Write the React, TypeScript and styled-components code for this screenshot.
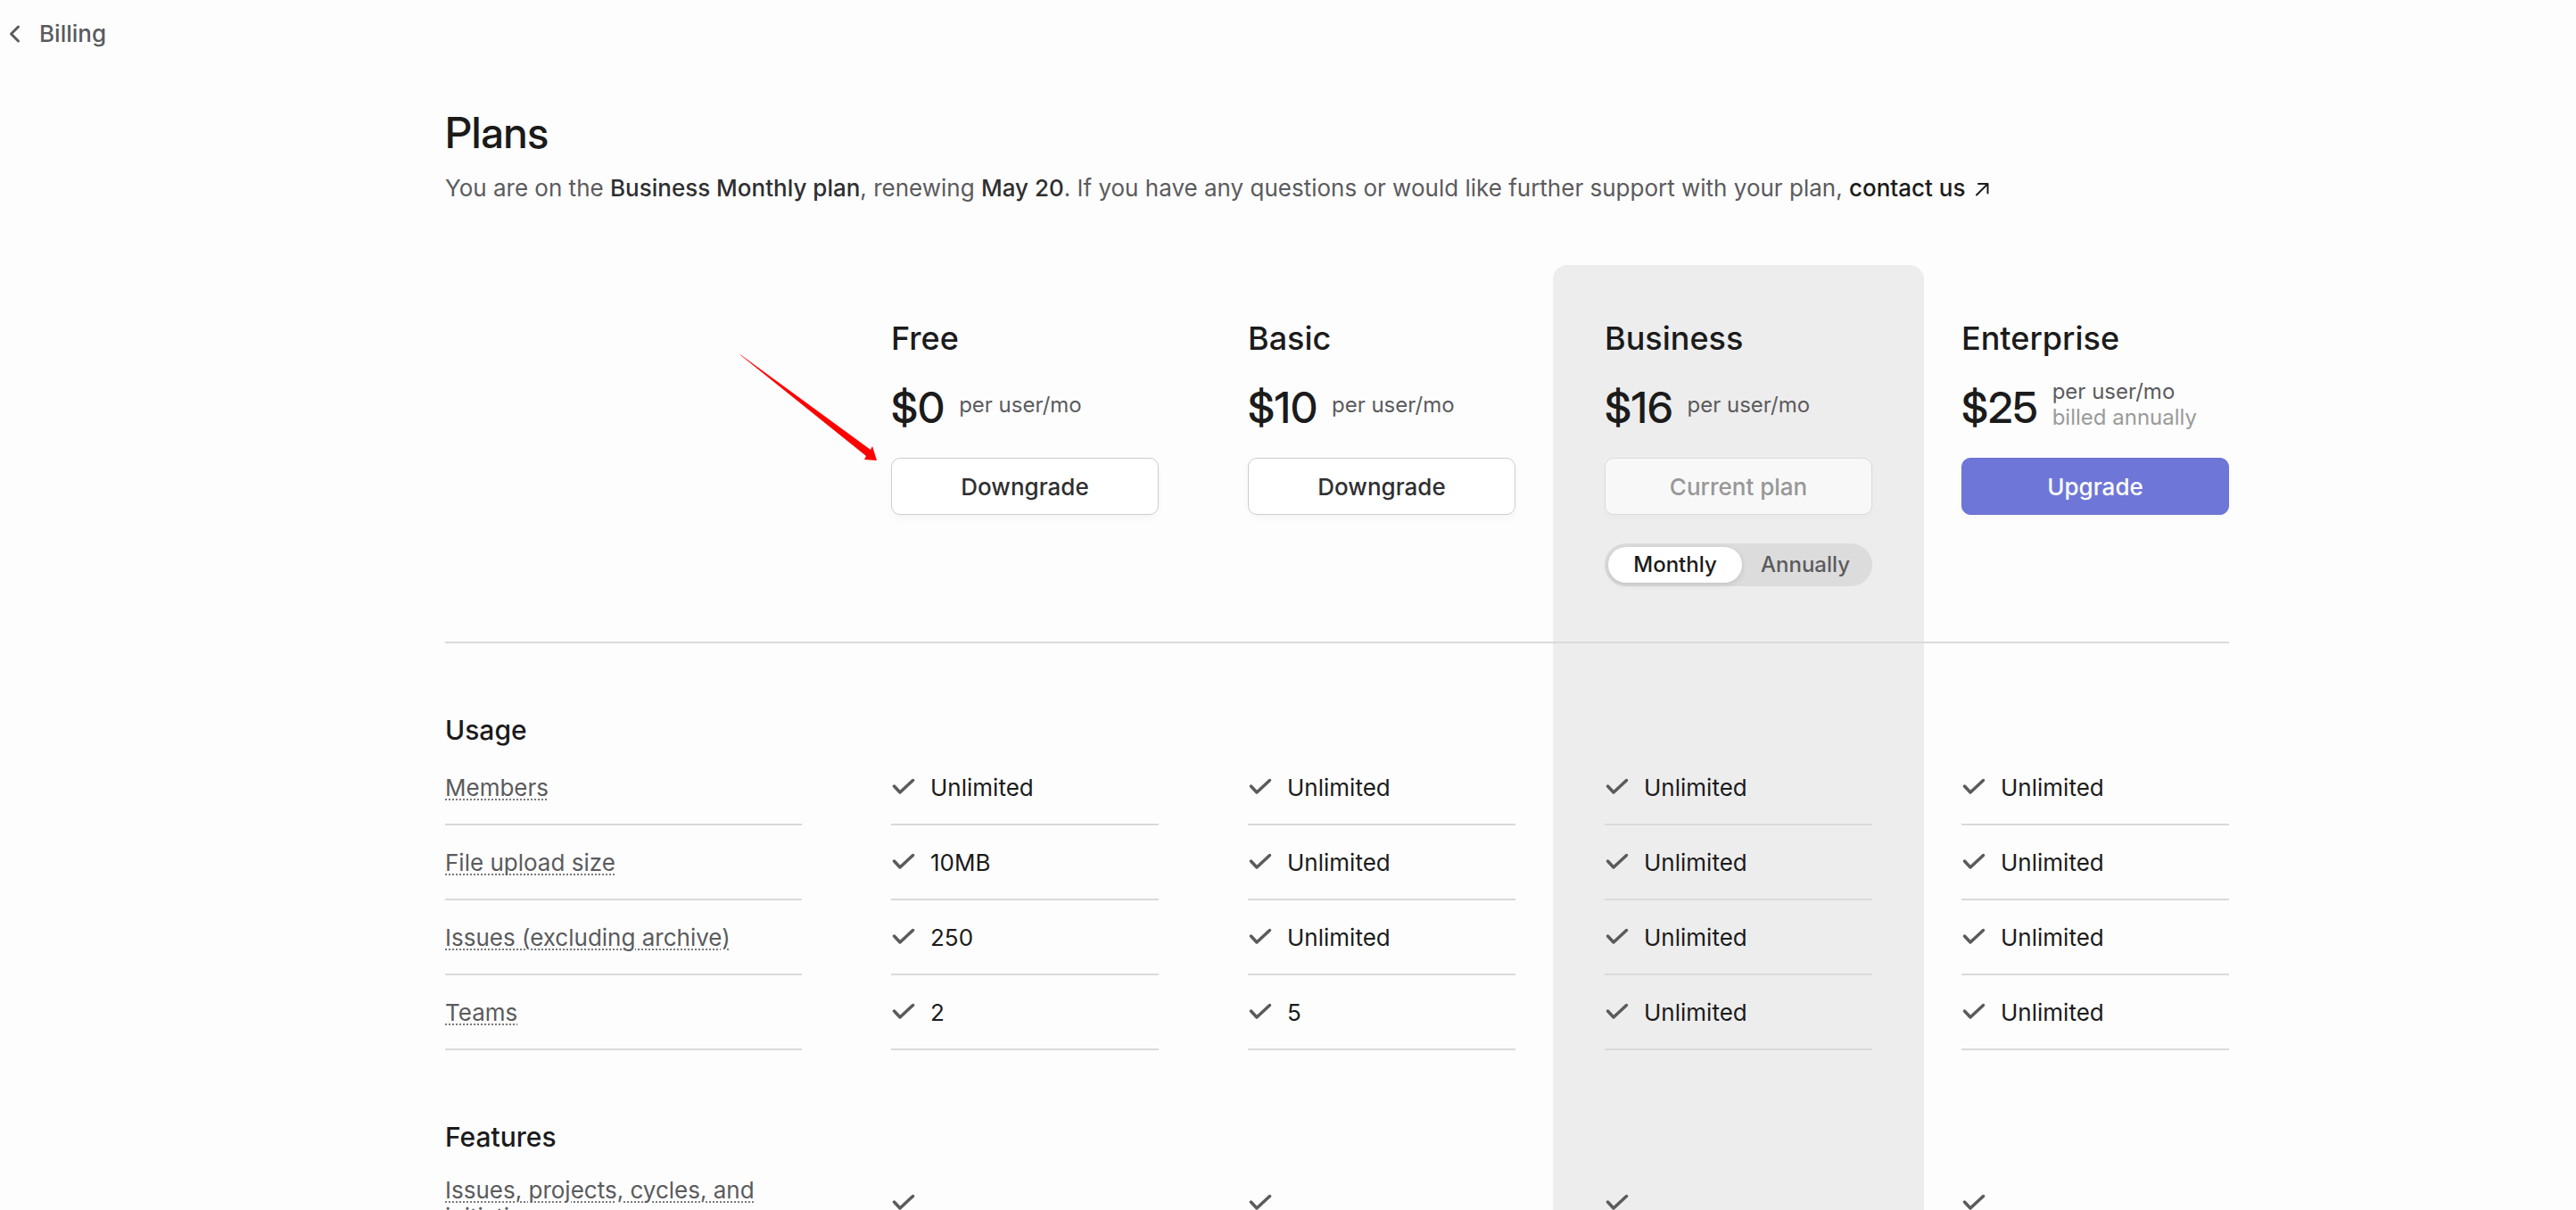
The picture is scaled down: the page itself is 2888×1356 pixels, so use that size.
import React, { useState } from "react";
import styled, { createGlobalStyle, css } from "styled-components";

const GlobalStyle = createGlobalStyle`
  *, *::before, *::after { box-sizing: border-box; }
  body {
    margin: 0;
    background: #fdfdfd;
    color: #1b1b1b;
    font-family: Inter, "Liberation Sans", sans-serif;
    font-size: 26px;
    font-weight: 400;
    line-height: 30px;
    -webkit-font-smoothing: antialiased;
  }
`;

const PLAN_COLUMNS = "4fr repeat(4, 3fr)";
const COLUMN_GAP = "100px";
const DISPLAY_FONT = '"Inter Display", Inter, "Liberation Sans", sans-serif';

const Page = styled.div`
  height: 100vh;
  overflow-y: auto;
  scrollbar-width: none;
`;

const TopBar = styled.header`
  display: flex;
  align-items: center;
  height: 76px;
  padding: 0 8px;
`;

const BackLink = styled.a`
  display: flex;
  align-items: center;
  gap: 20px;
  color: #5b5b5d;
  font-weight: 500;
  text-decoration: none;
`;

const Main = styled.main`
  padding-left: 110px;
`;

const Content = styled.div`
  max-width: 2000px;
  margin: 0 auto;
`;

const Title = styled.h1`
  margin: 0;
  padding-top: 44px;
  font-family: ${DISPLAY_FONT};
  font-size: 48px;
  font-weight: 500;
  line-height: 58px;
`;

const Intro = styled.p`
  margin: 0;
  padding: 11px 0 64px;
  line-height: 44px;
  color: #5b5b5d;
`;

const Strong = styled.strong`
  font-weight: 500;
  color: #2f2f31;
`;

const ContactLink = styled.a`
  color: #1b1b1b;
  font-weight: 500;
  text-decoration: none;
  white-space: nowrap;

  svg {
    margin-left: 10px;
  }
`;

const Comparison = styled.div`
  position: relative;
  display: grid;
  grid-template-columns: ${PLAN_COLUMNS};
  column-gap: ${COLUMN_GAP};
`;

const CurrentPlanBand = styled.div`
  grid-area: 1 / 4 / 2 / 5;
  margin: 0 -58px;
  border-radius: 16px 16px 0 0;
  background: #ededed;
`;

const Table = styled.table`
  display: block;
  grid-area: 1 / 1 / 2 / -1;
`;

const TableHead = styled.thead`
  display: block;
  border-bottom: 2px solid #d9dadb;
`;

const TableBody = styled.tbody`
  display: block;
`;

const Row = styled.tr`
  display: grid;
  grid-template-columns: ${PLAN_COLUMNS};
  column-gap: ${COLUMN_GAP};
`;

const PlanCell = styled.th`
  display: flex;
  flex-direction: column;
  padding: 60px 0 62px;
  font-weight: 400;
  text-align: left;
`;

const EmptyCell = styled.td`
  padding: 0;
`;

const PlanName = styled.h2`
  margin: 0;
  font-size: 36px;
  font-weight: 500;
  line-height: 44px;
`;

const PriceRow = styled.div`
  display: flex;
  align-items: center;
  gap: 16px;
  height: 60px;
  margin: 26px 0;
`;

const Price = styled.span`
  font-family: ${DISPLAY_FONT};
  font-size: 48px;
  font-weight: 500;
  line-height: 60px;
`;

const Terms = styled.div`
  padding-bottom: 8px;
  font-size: 24px;
  line-height: 29px;
  color: #5b5b5d;
`;

const Billed = styled.div`
  color: #9a9a9a;
`;

type Tone = "plain" | "current" | "primary";

const tones = {
  plain: css`
    border-color: #cdcdcd;
    background: #ffffff;
    color: #2f2f31;
    box-shadow: 0 4px 8px rgba(0, 0, 0, 0.03);
  `,
  current: css`
    border-color: #dadada;
    background: #f8f8f8;
    color: #979797;
    box-shadow: 0 4px 8px rgba(0, 0, 0, 0.02);
  `,
  primary: css`
    border-color: #6a72d2;
    background: #6e77d8;
    color: #ffffff;
    box-shadow: 0 4px 8px rgba(0, 0, 0, 0.02);
  `,
};

const PlanButton = styled.button<{ $tone: Tone }>`
  width: 100%;
  height: 64px;
  padding: 2px 24px 0;
  border: 1px solid;
  border-radius: 10px;
  font: inherit;
  font-weight: 500;
  ${({ $tone }) => tones[$tone]}
`;

const Toggle = styled.div`
  display: grid;
  grid-template-columns: 150px 1fr;
  height: 48px;
  margin-top: 32px;
  padding: 4px;
  border-radius: 24px;
  background: #dcdcdc;
`;

const ToggleOption = styled.button<{ $active: boolean }>`
  padding: 0;
  border: 0;
  border-radius: 20px;
  background: ${({ $active }) => ($active ? "#ffffff" : "transparent")};
  box-shadow: ${({ $active }) => ($active ? "0 2px 6px rgba(0, 0, 0, 0.12)" : "none")};
  color: ${({ $active }) => ($active ? "#1b1b1b" : "#5b5b5d")};
  font: inherit;
  font-size: 24px;
  font-weight: 500;
`;

const SectionHeading = styled.th`
  padding: 77px 0 3px;
  font-size: 30px;
  font-weight: 500;
  line-height: 40px;
  text-align: left;
`;

const LabelCell = styled.th`
  display: flex;
  align-items: center;
  min-height: 84px;
  padding: 22px 0 20px;
  border-bottom: 2px solid #d9dadb;
  color: #5b5b5d;
  font-weight: 400;
  text-align: left;
`;

const Label = styled.span`
  text-decoration: underline dotted #7a7a7c 2px;
  text-underline-offset: 3px;
`;

const ValueCell = styled.td`
  display: flex;
  align-items: center;
  gap: 16px;
  padding: 2px 0 0;
  border-bottom: 2px solid #d9dadb;
`;

const Annotation = styled.svg`
  position: absolute;
  left: 330px;
  top: 100px;
`;

const CheckIcon = () => (
  <svg width="28" height="28" viewBox="0 0 28 28" fill="none" role="img" aria-label="Included">
    <path d="M3.500 12l6.500 7L24.500 5.500" stroke="#5b5b5d" strokeWidth="3.500" strokeLinecap="round" strokeLinejoin="round" />
  </svg>
);

const ChevronIcon = () => (
  <svg width="16" height="24" viewBox="0 0 16 24" fill="none" aria-hidden="true">
    <path d="M12.500 4L4.500 12l8 8" stroke="#5b5b5d" strokeWidth="3" strokeLinecap="round" strokeLinejoin="round" />
  </svg>
);

const ExternalIcon = () => (
  <svg width="16" height="16" viewBox="0 0 16 16" fill="none" aria-hidden="true">
    <path d="M4 2h10.500v10.500M14 2.500L2 14.500" stroke="#1b1b1b" strokeWidth="2" strokeLinecap="round" strokeLinejoin="round" />
  </svg>
);

type Plan = {
  name: string;
  price: string;
  billed?: string;
  action: string;
  tone: Tone;
};

const plans: Plan[] = [
  { name: "Free", price: "$0", action: "Downgrade", tone: "plain" },
  { name: "Basic", price: "$10", action: "Downgrade", tone: "plain" },
  { name: "Business", price: "$16", action: "Current plan", tone: "current" },
  { name: "Enterprise", price: "$25", billed: "billed annually", action: "Upgrade", tone: "primary" },
];

const sections = [
  {
    title: "Usage",
    rows: [
      { label: "Members", values: ["Unlimited", "Unlimited", "Unlimited", "Unlimited"] },
      { label: "File upload size", values: ["10MB", "Unlimited", "Unlimited", "Unlimited"] },
      { label: "Issues (excluding archive)", values: ["250", "Unlimited", "Unlimited", "Unlimited"] },
      { label: "Teams", values: ["2", "5", "Unlimited", "Unlimited"] },
    ],
  },
  {
    title: "Features",
    rows: [{ label: "Issues, projects, cycles, and initiatives", values: ["", "", "", ""] }],
  },
];

const BillingToggle = () => {
  const [period, setPeriod] = useState("Monthly");
  return (
    <Toggle role="group" aria-label="Billing period">
      {["Monthly", "Annually"].map((option) => (
        <ToggleOption
          key={option}
          type="button"
          $active={option === period}
          aria-pressed={option === period}
          onClick={() => setPeriod(option)}
        >
          {option}
        </ToggleOption>
      ))}
    </Toggle>
  );
};

export default function App() {
  return (
    <Page>
      <GlobalStyle />
      <TopBar>
        <BackLink href="#billing">
          <ChevronIcon />
          Billing
        </BackLink>
      </TopBar>
      <Main>
        <Content>
          <Title>Plans</Title>
          <Intro>
            You are on the <Strong>Business Monthly plan</Strong>, renewing <Strong>May 20</Strong>. If you have any
            questions or would like further support with your plan,{" "}
            <ContactLink href="#contact">
              contact us
              <ExternalIcon />
            </ContactLink>
          </Intro>
          <Comparison>
            <CurrentPlanBand />
            <Table>
              <TableHead>
                <Row>
                  <EmptyCell />
                  {plans.map((plan) => (
                    <PlanCell key={plan.name} scope="col">
                      <PlanName>{plan.name}</PlanName>
                      <PriceRow>
                        <Price>{plan.price}</Price>
                        <Terms>
                          per user/mo
                          {plan.billed && <Billed>{plan.billed}</Billed>}
                        </Terms>
                      </PriceRow>
                      <PlanButton type="button" $tone={plan.tone} disabled={plan.tone === "current"}>
                        {plan.action}
                      </PlanButton>
                      {plan.tone === "current" && <BillingToggle />}
                    </PlanCell>
                  ))}
                </Row>
              </TableHead>
              {sections.map((section) => (
                <TableBody key={section.title}>
                  <Row>
                    <SectionHeading scope="rowgroup">{section.title}</SectionHeading>
                  </Row>
                  {section.rows.map((row) => (
                    <Row key={row.label}>
                      <LabelCell scope="row">
                        <Label>{row.label}</Label>
                      </LabelCell>
                      {row.values.map((value, index) => (
                        <ValueCell key={plans[index].name}>
                          <CheckIcon />
                          {value}
                        </ValueCell>
                      ))}
                    </Row>
                  ))}
                </TableBody>
              ))}
            </Table>
            <Annotation width="156" height="120" viewBox="0 0 156 120" aria-hidden="true">
              <path d="M0 0L2 1L147 107L149 103L154 119L140 118L142 114Z" fill="#ff0000" />
            </Annotation>
          </Comparison>
        </Content>
      </Main>
    </Page>
  );
}
